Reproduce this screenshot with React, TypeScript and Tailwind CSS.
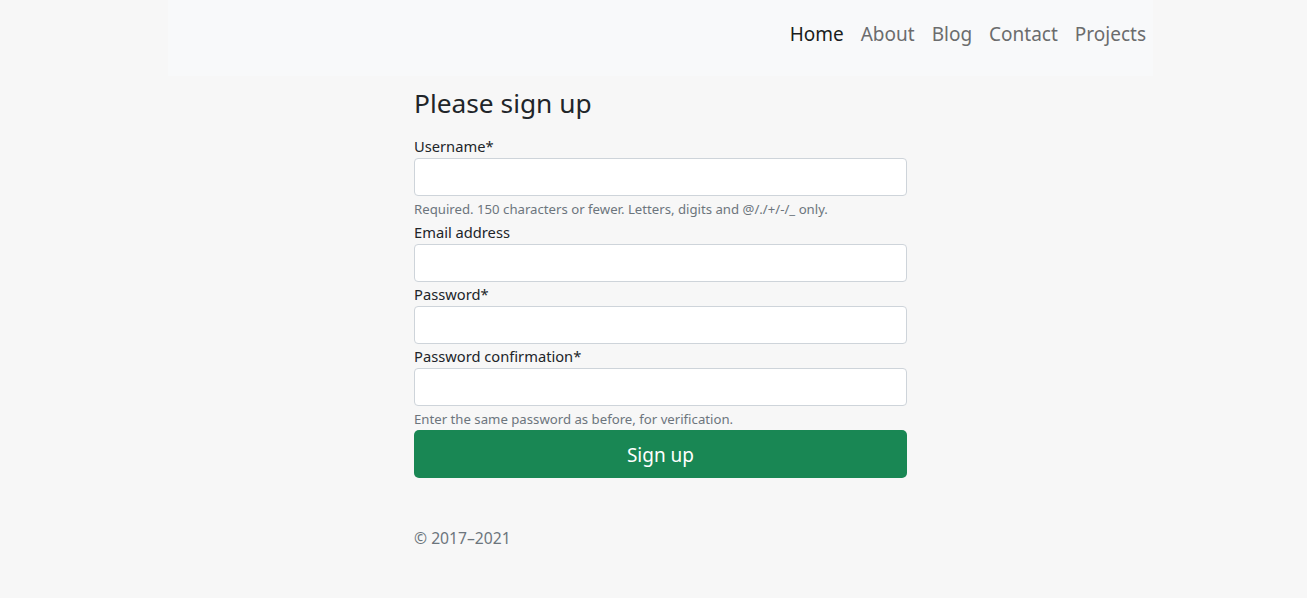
const font = { fontFamily: '"Noto Sans", "Liberation Sans", sans-serif' }

const links = ['Home', 'About', 'Blog', 'Contact', 'Projects']

function Field({ label, help }: { label: string; help?: string }) {
  return (
    <div>
      <label className="block h-6 text-[14.7px] leading-6 text-[#212529]">{label}</label>
      <input className="block h-[38px] w-full rounded border border-[#ced4da] bg-white px-3 outline-none" />
      {help && <div className="h-6 pt-[3px] text-[13.2px] leading-5 text-[#6c757d]">{help}</div>}
    </div>
  )
}

export default function App() {
  return (
    <div className="min-h-[598px] bg-[#f7f7f7]" style={font}>
      <nav className="ml-[168px] flex h-[76px] w-[985px] items-start justify-end bg-[#f8f9fa] pr-[7px] pt-[21px]">
        <ul className="flex gap-[17px]">
          {links.map((l, i) => (
            <li key={l}>
              <a
                href="#"
                className={`text-[19px] leading-[26px] ${i === 0 ? 'text-[#1a1d20]' : 'text-[#6b6c6d]'}`}
              >
                {l}
              </a>
            </li>
          ))}
        </ul>
      </nav>
      <main className="ml-[414px] w-[493px]">
        <h1 className="mt-[7px] mb-[11px] h-10 text-[26.3px] leading-10 text-[#212529]">Please sign up</h1>
        <form onSubmit={e => e.preventDefault()}>
          <Field label="Username*" help="Required. 150 characters or fewer. Letters, digits and @/./+/-/_ only." />
          <Field label="Email address" />
          <Field label="Password*" />
          <Field label="Password confirmation*" help="Enter the same password as before, for verification." />
          <button
            type="submit"
            className="block h-12 w-full rounded-[5px] bg-[#198754] pt-[2px] text-[19px] text-white"
          >
            Sign up
          </button>
        </form>
        <footer className="mt-12 h-6 text-[15.7px] leading-6 text-[#6c757d]">© 2017–2021</footer>
      </main>
    </div>
  )
}
